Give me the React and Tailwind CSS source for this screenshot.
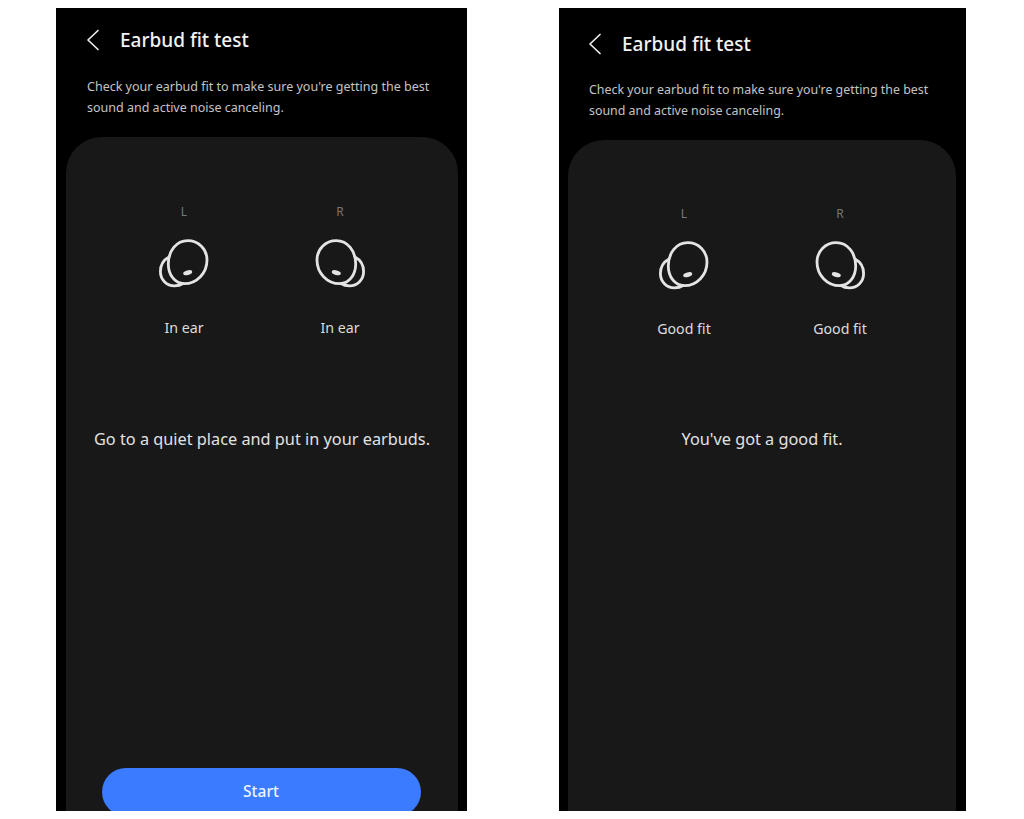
const font = { fontFamily: '"Noto Sans", sans-serif' }

function EarbudIcon({ flip }) {
  return (
    <svg
      width="50"
      height="50"
      viewBox="0 0 50 50"
      fill="none"
      stroke="#e4e4e4"
      strokeWidth="2.8"
      className={flip ? '-scale-x-100' : ''}
    >
      <path d="M10 18C4.5 21 1.4 26.5 1.4 32.5C1.4 40.5 7.5 46.8 15.5 46.8C18.8 46.8 21.8 46 24 44.5" strokeLinecap="round" />
      <path d="M28.7 1.7C39.5 1.7 48 10 48 21C48 34 38 44.7 25.3 44.7C16 44.7 9.3 36 9.3 25C9.3 12 17.5 1.7 28.7 1.7Z" />
      <ellipse cx="28.7" cy="33.7" rx="4.6" ry="2.3" transform="rotate(-15 28.7 33.7)" fill="#e4e4e4" stroke="none" />
    </svg>
  )
}

function Side({ letter, status, flip, iconGap, labelGap }) {
  return (
    <div className="w-[156px] flex flex-col items-center">
      <div className="h-[16px] leading-[16px] text-[12px] text-[#777777]">{letter}</div>
      <div className={iconGap}>
        <EarbudIcon flip={flip} />
      </div>
      <div className={`h-[22px] leading-[22px] text-[14.2px] text-[#dcdcdc] ${labelGap}`}>{status}</div>
    </div>
  )
}

function Phone({ wrap, head, desc, card, sides, iconGap, labelGap, msg, status, text, children }) {
  return (
    <div className={`bg-black h-[803px] overflow-hidden shrink-0 ${wrap}`} style={font}>
      <div className={`flex items-center ${head}`}>
        <svg width="14" height="22" viewBox="0 0 14 22" fill="none" stroke="#ececec" strokeWidth="1.7" strokeLinecap="round" strokeLinejoin="round">
          <path d="M12 1.5L2 11L12 20.5" />
        </svg>
        <h1 className="ml-[20px] text-[19px] leading-[28px] font-medium text-[#f2f2f2]">Earbud fit test</h1>
      </div>
      <p className={`leading-[21px] text-[#c4c4c4] ${desc}`}>
        Check your earbud fit to make sure you're getting the best
        <br />
        sound and active noise canceling.
      </p>
      <div className={`bg-[#181818] rounded-t-[36px] h-[700px] flex flex-col items-center ${card}`}>
        <div className={`flex justify-center ${sides}`}>
          <Side letter="L" status={status} iconGap={iconGap} labelGap={labelGap} />
          <Side letter="R" status={status} iconGap={iconGap} labelGap={labelGap} flip />
        </div>
        <p className={`text-[16.3px] leading-[24px] text-[#e2e2e2] ${msg}`}>{text}</p>
        {children}
      </div>
    </div>
  )
}

export default function App() {
  return (
    <div className="w-[1024px] h-[819px] bg-white pt-[8px] pl-[56px] flex gap-[92px] overflow-hidden">
      <Phone
        wrap="w-[411px]"
        head="pt-[18px] pl-[30px]"
        desc="mt-[22px] ml-[31px] text-[12.5px]"
        card="mt-[19px] ml-[10px] mr-[9px]"
        sides="mt-[67px]"
        iconGap="mt-[19px]"
        labelGap="mt-[28px]"
        msg="mt-[88px]"
        status="In ear"
        text="Go to a quiet place and put in your earbuds."
      >
        <button className="mt-[317px] w-[319px] h-[48px] shrink-0 rounded-full bg-[#3b7bff] text-[15.5px] font-medium text-[#eef3ff] -translate-x-px">
          Start
        </button>
      </Phone>
      <Phone
        wrap="w-[407px]"
        head="pt-[22px] pl-[29px]"
        desc="mt-[21px] ml-[30px] text-[12.4px]"
        card="mt-[19px] ml-[9px] mr-[10px]"
        sides="mt-[66px]"
        iconGap="mt-[19px]"
        labelGap="mt-[27px]"
        msg="mt-[87px]"
        status="Good fit"
        text="You've got a good fit."
      />
    </div>
  )
}
